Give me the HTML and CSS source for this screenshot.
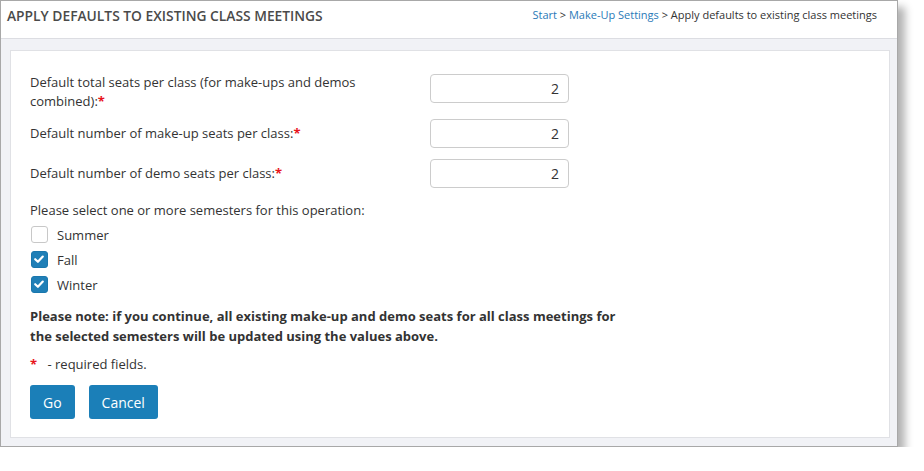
FILE: index.html
```html
<!DOCTYPE html>
<html lang="en">
  <head>
    <meta charset="UTF-8" />
    <title>Apply defaults to existing class meetings</title>
    <link rel="stylesheet" href="styles.css">
  </head>
  <body>
    <div class="window">
      <div class="page-header">
        <h1>APPLY DEFAULTS TO EXISTING CLASS MEETINGS</h1>
        <div class="breadcrumb">
          <a href="#">Start</a> &gt; <a href="#">Make-Up Settings</a> &gt; Apply defaults to existing class meetings
        </div>
      </div>
      <div class="page-body">
        <div class="card">
          <div class="form-grid">
            <label for="total" class="two-line">Default total seats per class (for make-ups and demos combined):<span class="req">*</span></label>
            <input type="text" id="total" value="2" />
            <label for="makeup">Default number of make-up seats per class:<span class="req">*</span></label>
            <input type="text" id="makeup" value="2" />
            <label for="demo">Default number of demo seats per class:<span class="req">*</span></label>
            <input type="text" id="demo" value="2" />
          </div>
          <p class="select-text">Please select one or more semesters for this operation:</p>
          <div class="semesters">
            <label class="check"><span class="box"></span>Summer</label>
            <label class="check"><span class="box checked"><svg viewBox="0 0 16 16" width="16" height="16"><path d="M4.2 8.2 L6.9 10.8 L11.8 5.6" fill="none" stroke="#fff" stroke-width="2.2" stroke-linecap="round" stroke-linejoin="round"/></svg></span>Fall</label>
            <label class="check"><span class="box checked"><svg viewBox="0 0 16 16" width="16" height="16"><path d="M4.2 8.2 L6.9 10.8 L11.8 5.6" fill="none" stroke="#fff" stroke-width="2.2" stroke-linecap="round" stroke-linejoin="round"/></svg></span>Winter</label>
          </div>
          <p class="note">Please note: if you continue, all existing make-up and demo seats for all class meetings for the selected semesters will be updated using the values above.</p>
          <p class="required"><span class="req">*</span> - required fields.</p>
          <div class="actions">
            <button>Go</button>
            <button>Cancel</button>
          </div>
        </div>
      </div>
    </div>
  </body>
</html>
```

FILE: styles.css
```css
body {
  margin: 0;
  background: #ffffff;
  font-family: "Open Sans", Arial, sans-serif;
  color: #333333;
}
.window {
  width: 896px;
  border: 1px solid #a8a8a8;
  background: #f1f2f6;
  box-shadow: 7px 7px 8px rgba(0, 0, 0, 0.3);
}
.page-header {
  display: flex;
  justify-content: space-between;
  align-items: flex-start;
  height: 37px;
  padding: 0 20px 0 6px;
  background: #ffffff;
  border-bottom: 1px solid #dcdde2;
}
.page-header h1 {
  margin: 5px 0 0 0;
  font-size: 13.8px;
  font-weight: 600;
  color: #4a4a4a;
}
.breadcrumb {
  margin-top: 6px;
  font-size: 11px;
  color: #333333;
}
.breadcrumb a {
  color: #2a7ab8;
  text-decoration: none;
}
.page-body {
  padding: 11px 7px 8px 9px;
}
.card {
  background: #ffffff;
  border: 1px solid #e0e1e5;
  padding: 17px 19px 18px 19px;
}
.form-grid {
  display: grid;
  grid-template-columns: 400px 139px;
  align-items: center;
  row-gap: 11px;
  font-size: 13px;
  line-height: 19px;
}
.form-grid label {
  padding-right: 40px;
}
.form-grid label.two-line {
  padding-top: 5px;
  margin-bottom: -3px;
}
.form-grid input {
  box-sizing: border-box;
  width: 139px;
  height: 29px;
  border: 1px solid #cccccc;
  border-radius: 4px;
  text-align: right;
  font-family: "Open Sans", Arial, sans-serif;
  font-size: 14px;
  color: #333333;
  padding: 0 9px;
}
.req {
  color: #e8141c;
  font-weight: 700;
}
.select-text {
  margin: 13px 0 2px 0;
  font-size: 13px;
  line-height: 19px;
}
.semesters {
  display: flex;
  flex-direction: column;
}
.check {
  display: flex;
  align-items: center;
  height: 25px;
  font-size: 13px;
}
.box {
  box-sizing: border-box;
  width: 17px;
  height: 17px;
  margin: 0 9px 0 1px;
  border: 1px solid #c8c8c8;
  border-radius: 3px;
  background: #ffffff;
}
.box.checked {
  border-color: #1a77ad;
  background: #1f7fb7;
}
.box svg {
  display: block;
  margin: -1px 0 0 -1px;
}
.note {
  margin: 9px 0 0 0;
  width: 600px;
  font-size: 13px;
  font-weight: 700;
  line-height: 20px;
  color: #333333;
}
.required {
  margin: 9px 0 0 0;
  font-size: 13px;
  line-height: 19px;
}
.required .req {
  margin-right: 7px;
}
.actions {
  display: flex;
  gap: 14px;
  margin-top: 11px;
}
.actions button {
  height: 34px;
  padding: 0 13px;
  border: none;
  border-radius: 3px;
  background: #1b7fb8;
  color: #ffffff;
  font-family: "Open Sans", Arial, sans-serif;
  font-size: 14px;
}
```
